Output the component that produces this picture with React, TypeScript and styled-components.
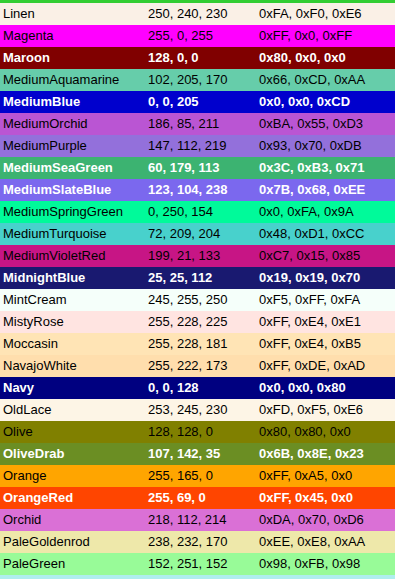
import React from 'react';
import styled, { createGlobalStyle } from 'styled-components';

const GlobalStyle = createGlobalStyle`
  html, body {
    margin: 0;
    padding: 0;
    background: #ffffff;
    overflow: hidden;
  }
`;

const Viewport = styled.div`
  width: 395px;
  height: 579px;
  overflow: hidden;
  font-family: "Liberation Sans", Arial, sans-serif;
  font-size: 13px;
`;

// the list is scrolled so that only the bottom of the first row shows
const List = styled.div`
  display: flex;
  flex-direction: column;
  margin-top: -19px;
`;

const Row = styled.div<{ $bg: string; $dark: boolean }>`
  display: grid;
  grid-template-columns: 145px 111px 1fr;
  height: 22px;
  line-height: 22px;
  background: ${props => props.$bg};
  color: ${props => props.$dark ? '#ffffff' : '#000000'};
  font-weight: ${props => props.$dark ? 700 : 400};
`;

const Cell = styled.div`
  padding-left: 3px;
  white-space: nowrap;
  overflow: hidden;
`;

type ColorEntry = [string, number, number, number];

const colors: ColorEntry[] = [
  ['LimeGreen', 50, 205, 50],
  ['Linen', 250, 240, 230],
  ['Magenta', 255, 0, 255],
  ['Maroon', 128, 0, 0],
  ['MediumAquamarine', 102, 205, 170],
  ['MediumBlue', 0, 0, 205],
  ['MediumOrchid', 186, 85, 211],
  ['MediumPurple', 147, 112, 219],
  ['MediumSeaGreen', 60, 179, 113],
  ['MediumSlateBlue', 123, 104, 238],
  ['MediumSpringGreen', 0, 250, 154],
  ['MediumTurquoise', 72, 209, 204],
  ['MediumVioletRed', 199, 21, 133],
  ['MidnightBlue', 25, 25, 112],
  ['MintCream', 245, 255, 250],
  ['MistyRose', 255, 228, 225],
  ['Moccasin', 255, 228, 181],
  ['NavajoWhite', 255, 222, 173],
  ['Navy', 0, 0, 128],
  ['OldLace', 253, 245, 230],
  ['Olive', 128, 128, 0],
  ['OliveDrab', 107, 142, 35],
  ['Orange', 255, 165, 0],
  ['OrangeRed', 255, 69, 0],
  ['Orchid', 218, 112, 214],
  ['PaleGoldenrod', 238, 232, 170],
  ['PaleGreen', 152, 251, 152],
  ['PaleTurquoise', 175, 238, 238],
];

const darkRows = new Set([
  'Maroon', 'MediumBlue', 'MediumSeaGreen', 'MediumSlateBlue',
  'MidnightBlue', 'Navy', 'OliveDrab', 'OrangeRed',
]);

const hex = (n: number) => '0x' + n.toString(16).toUpperCase();

const App: React.FC = () => {
  return (
    <>
      <GlobalStyle />
      <Viewport>
        <List>
          {colors.map(([name, r, g, b]) => (
            <Row key={name} $bg={`rgb(${r}, ${g}, ${b})`} $dark={darkRows.has(name)}>
              <Cell>{name}</Cell>
              <Cell>{`${r}, ${g}, ${b}`}</Cell>
              <Cell>{`${hex(r)}, ${hex(g)}, ${hex(b)}`}</Cell>
            </Row>
          ))}
        </List>
      </Viewport>
    </>
  );
};

export default App;
